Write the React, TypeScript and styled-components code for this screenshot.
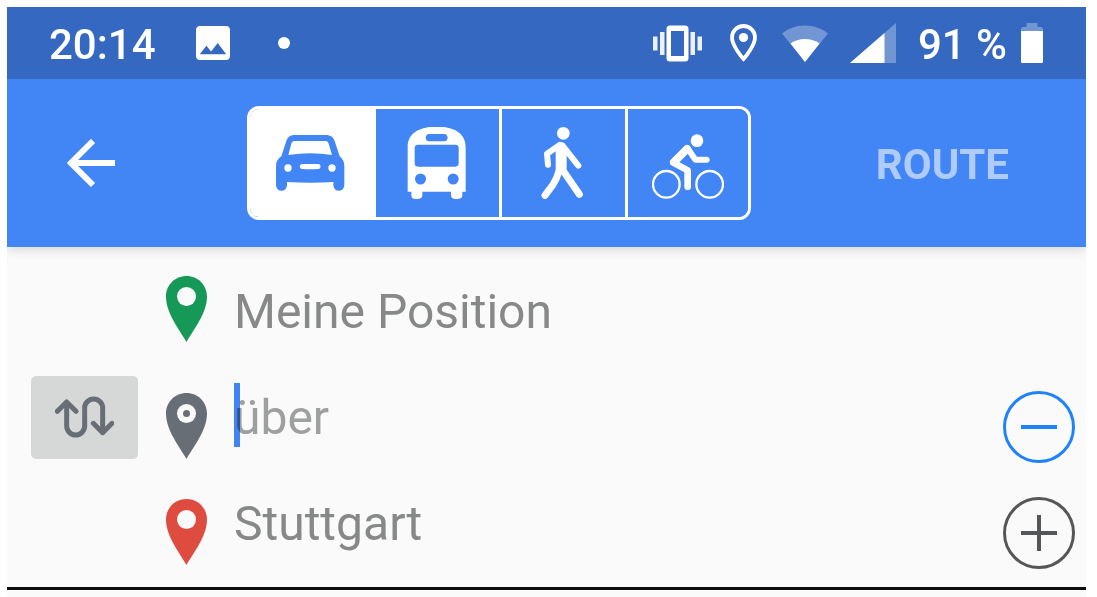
import React from "react";
import styled, { createGlobalStyle } from "styled-components";

const GlobalStyle = createGlobalStyle`
  * { box-sizing: border-box; }
  body {
    margin: 0;
    background: #ffffff;
    font-family: Roboto, "Liberation Sans", sans-serif;
  }
  button { font: inherit; margin: 0; padding: 0; border: 0; background: none; cursor: pointer; }
  svg { display: block; flex: none; }
`;

const Page = styled.div`
  padding: 7px 11px 0 7px;
`;

const Screen = styled.main`
  background: #fafafa;
`;

const StatusBar = styled.div`
  display: flex;
  align-items: center;
  justify-content: space-between;
  height: 72px;
  padding: 0 43px 0 42px;
  background: #3569c1;
  color: #ffffff;
`;

const StatusGroup = styled.div`
  display: flex;
  align-items: center;
`;

const StatusText = styled.span`
  padding-top: 4px;
  font-size: 42px;
  line-height: 48px;
  font-weight: 500;
  white-space: nowrap;
`;

const StatusItem = styled.span<{ $gap: number }>`
  display: flex;
  margin-left: ${(p) => p.$gap}px;
`;

const Dot = styled.span`
  width: 12px;
  height: 12px;
  border-radius: 50%;
  background: #ffffff;
`;

const Toolbar = styled.header`
  position: relative;
  display: flex;
  align-items: center;
  height: 168px;
  padding: 0 77px 0 60px;
  background: #4286f5;
  box-shadow: 0 3px 10px rgba(0, 0, 0, 0.14);
  clip-path: inset(0 0 -20px 0);
`;

const BackButton = styled.button`
  color: #ffffff;
`;

const ModeGroup = styled.div`
  display: flex;
  width: 504px;
  height: 114px;
  margin: 0 auto 0 131px;
  border: 3px solid #ffffff;
  border-radius: 12px;
  overflow: hidden;
`;

const ModeButton = styled.button<{ $active?: boolean }>`
  display: flex;
  align-items: center;
  justify-content: center;
  flex: 0 0 126px;
  border-right: 3px solid #ffffff;
  background: ${(p) => (p.$active ? "#ffffff" : "#4286f5")};
  color: ${(p) => (p.$active ? "#4286f5" : "#ffffff")};

  &:last-child {
    flex: 1;
    border-right: 0;
  }
`;

const RouteButton = styled.button`
  padding-top: 4px;
  color: #aecbfb;
  font-size: 42px;
  line-height: 48px;
  font-weight: 700;
`;

const Stops = styled.form`
  padding: 12px 11px 10px 24px;
  border-bottom: 3px solid #0c0c0c;
`;

const StopRow = styled.div`
  display: grid;
  grid-template-columns: 107px 41px 1fr 72px;
  align-items: center;
  height: 106px;
`;

const SwapButton = styled.button`
  display: flex;
  align-items: center;
  justify-content: center;
  height: 83px;
  margin-bottom: 2px;
  border-radius: 5px;
  background: #d6d8d7;
  color: #676e76;
`;

const PinSlot = styled.div<{ $raised?: boolean }>`
  grid-column: 2;
  align-self: end;
  width: 41px;
  margin-left: 28px;
  padding-bottom: ${(p) => (p.$raised ? 23 : 12)}px;
`;

const Field = styled.div`
  position: relative;
  grid-column: 3;
  margin: 0 24px 0 55px;
`;

const StopInput = styled.input`
  display: block;
  width: 100%;
  height: 64px;
  padding: 0;
  border: 0;
  outline: 0;
  background: transparent;
  color: #878988;
  font-family: inherit;
  font-size: 48px;
  line-height: 64px;

  &::placeholder { color: #9ea09f; opacity: 1; }
`;

const Caret = styled.span`
  position: absolute;
  top: -3px;
  left: 0;
  width: 6px;
  height: 64px;
  background: #4286f5;
  mix-blend-mode: multiply;
`;

const RoundButton = styled.button<{ $primary?: boolean }>`
  grid-column: 4;
  align-self: end;
  margin-bottom: 8px;
  color: ${(p) => (p.$primary ? "#1f82fb" : "#555657")};
`;

const Footer = styled.div`
  height: 7px;
`;

const PhotoIcon = () => (
  <svg width="34" height="34" viewBox="3 3 18 18" fill="currentColor">
    <path d="M21 19V5c0-1.100-.9-2-2-2H5c-1.100 0-2 .9-2 2v14c0 1.100.9 2 2 2h14c1.100 0 2-.9 2-2zM8.500 13.500l2.500 3.010L14.500 12l4.500 6H5l3.500-4.500z" />
  </svg>
);

const VibrateIcon = () => (
  <svg width="49" height="37" viewBox="0 0 49 37" fill="currentColor">
    <rect x="0" y="11.500" width="4.500" height="14" opacity=".9" />
    <rect x="7" y="7" width="4.500" height="23" opacity=".9" />
    <rect x="37.500" y="7" width="4.500" height="23" opacity=".9" />
    <rect x="44.500" y="11.500" width="4.500" height="14" opacity=".9" />
    <path fillRule="evenodd" d="M17 .5h15a3.500 3.500 0 0 1 3.500 3.500v29a3.500 3.500 0 0 1-3.500 3.500H17a3.500 3.500 0 0 1-3.500-3.500V4A3.500 3.500 0 0 1 17 .5zM18 6v25h13V6z" />
  </svg>
);

const LocationIcon = () => (
  <svg width="27" height="38" viewBox="0 0 27 38">
    <path d="M13.500 2C7 2 2 7 2 13.500 2 22 13.500 35 13.500 35S25 22 25 13.500C25 7 20 2 13.500 2z" fill="none" stroke="currentColor" strokeWidth="3.800" />
    <circle cx="13.500" cy="13.500" r="4.600" fill="currentColor" />
  </svg>
);

const WifiIcon = () => (
  <svg width="46" height="37" viewBox="0 0 46 37" fill="currentColor">
    <path opacity=".3" d="M0 8.500C6 3.500 14 .5 23 .5s17 3 23 8L23 37z" />
    <path d="M8.500 18.500c4-3 9-4.500 14.500-4.500s10.500 1.500 14.500 4.500L23 37z" />
  </svg>
);

const SignalIcon = () => (
  <svg width="46" height="40" viewBox="0 0 46 40" fill="currentColor">
    <path opacity=".3" d="M0 40L46 0v40z" />
    <path d="M0 40L34.500 10v30z" />
  </svg>
);

const BatteryIcon = () => (
  <svg width="22" height="40" viewBox="0 0 22 40" fill="currentColor">
    <path opacity=".3" d="M5.500 0h11v4H20a2 2 0 0 1 2 2v2H0V6a2 2 0 0 1 2-2h3.500z" />
    <path d="M0 8h22v31a1 1 0 0 1-1 1H1a1 1 0 0 1-1-1z" />
  </svg>
);

const BackIcon = () => (
  <svg width="49" height="49" viewBox="0 0 49 49" fill="none" stroke="currentColor" strokeWidth="6">
    <path d="M48 24H6M26 2l-22 22 22 22" />
  </svg>
);

const CarIcon = () => (
  <svg width="72" height="72" viewBox="108 96 216 216" fill="currentColor">
    <path
      fillRule="evenodd"
      d="M164 120H258C272 120 280 127 284 138L299 184C308 192 313 200 313 213V271A16.500 16.500 0 0 1 280 271V261Q211 266 141 261V271A16.500 16.500 0 0 1 108 271V213C108 200 113 192 124 184L139 138C143 127 150 120 164 120Z
        M164 138C159 138 156 140 154 146L145 180Q210 170 276 180L266 146C264 140 261 138 256 138Z
        M155 219A11 11 0 1 0 133 219A11 11 0 1 0 155 219Z
        M287 219A11 11 0 1 0 265 219A11 11 0 1 0 287 219Z
        M187 207A7.500 7.500 0 0 0 187 222Q211 224 234 222A7.500 7.500 0 0 0 234 207Z"
    />
  </svg>
);

const BusIcon = () => (
  <svg width="72" height="72" viewBox="484 96 216 216" fill="currentColor">
    <path
      fillRule="evenodd"
      d="M501 290V156C501 112 540 95 588 95S675 112 675 156V290H665V299C665 308 660 312 648 312S631 308 631 299V290H545V299C545 308 540 312 528 312S512 308 512 299V290Z
        M565 117C552 117 552 139 565 139H611C624 139 624 117 611 117Z
        M532 149Q522 149 522 159V205Q522 215 532 215H644Q654 215 654 205V159Q654 149 644 149Z
        M556 252A16.500 16.500 0 1 0 523 252A16.500 16.500 0 1 0 556 252Z
        M654 252A16.500 16.500 0 1 0 621 252A16.500 16.500 0 1 0 654 252Z"
    />
  </svg>
);

const WalkIcon = () => (
  <svg width="72" height="72" viewBox="114 96 216 216" fill="none" stroke="currentColor" strokeLinecap="round" strokeLinejoin="round">
    <circle cx="220" cy="115" r="19" fill="currentColor" stroke="none" />
    <path d="M197 160Q212 132 230 156V222L222 238H204L197 228Z" fill="currentColor" stroke="none" />
    <path strokeWidth="18" d="M174 209L171 176L209 150M217 151L265 212" />
    <path strokeWidth="21" d="M207 228Q200 252 189 269L165 301M220 228L268 298" />
  </svg>
);

const BikeIcon = () => (
  <svg width="72" height="72" viewBox="486 96 216 216" fill="none" stroke="currentColor" strokeLinecap="round" strokeLinejoin="round">
    <circle cx="621" cy="137" r="19" fill="currentColor" stroke="none" />
    <circle cx="529" cy="268" r="40" strokeWidth="7" />
    <circle cx="659" cy="268" r="40" strokeWidth="7" />
    <path strokeWidth="24" d="M591 162L552 201" />
    <path strokeWidth="20" d="M550 203L593 226V275" />
    <path strokeWidth="18" d="M593 160L616 194H650" />
  </svg>
);

const SwapIcon = () => (
  <svg width="59" height="46" viewBox="165 461 177 138" fill="none" stroke="currentColor" strokeWidth="15" strokeLinecap="round" strokeLinejoin="round">
    <path d="M172 513L200 485L228 513M200 487V557A27 27 0 0 0 254 557V503A27 27 0 0 1 308 503V572M280 549L308 577L336 549" />
  </svg>
);

const PinIcon = ({ color, dotted }: { color: string; dotted?: boolean }) => (
  <svg width="41" height="66" viewBox="0 0 41 66">
    <path d="M20.500 0C9 0 0 9 0 20.500 0 37 13 53 20.500 66 28 53 41 37 41 20.500 41 9 32 0 20.500 0z" fill={color} />
    <circle cx="20.500" cy="20.500" r="9.500" fill="#fafafa" />
    {dotted && <circle cx="20.500" cy="20.500" r="3.500" fill={color} />}
  </svg>
);

const CircleIcon = ({ plus }: { plus?: boolean }) => (
  <svg width="72" height="72" viewBox="0 0 72 72" fill="none" stroke="currentColor">
    <circle cx="36" cy="36" r="34.500" strokeWidth="3" />
    <path strokeWidth="4" d={plus ? "M18 36H54M36 18V54" : "M18 36H54"} />
  </svg>
);

export default function App() {
  return (
    <>
      <GlobalStyle />
      <Page>
        <Screen>
          <StatusBar>
            <StatusGroup>
              <StatusText>20:14</StatusText>
              <StatusItem $gap={40}><PhotoIcon /></StatusItem>
              <StatusItem $gap={48}><Dot /></StatusItem>
            </StatusGroup>
            <StatusGroup>
              <VibrateIcon />
              <StatusItem $gap={28}><LocationIcon /></StatusItem>
              <StatusItem $gap={25}><WifiIcon /></StatusItem>
              <StatusItem $gap={22}><SignalIcon /></StatusItem>
              <StatusItem $gap={22}><StatusText>91 %</StatusText></StatusItem>
              <StatusItem $gap={14}><BatteryIcon /></StatusItem>
            </StatusGroup>
          </StatusBar>
          <Toolbar>
            <BackButton type="button" aria-label="Zurück"><BackIcon /></BackButton>
            <ModeGroup role="group" aria-label="Verkehrsmittel">
              <ModeButton type="button" $active aria-pressed="true" aria-label="Auto"><CarIcon /></ModeButton>
              <ModeButton type="button" aria-label="Bus"><BusIcon /></ModeButton>
              <ModeButton type="button" aria-label="Zu Fuß"><WalkIcon /></ModeButton>
              <ModeButton type="button" aria-label="Fahrrad"><BikeIcon /></ModeButton>
            </ModeGroup>
            <RouteButton type="button">ROUTE</RouteButton>
          </Toolbar>
          <Stops>
            <StopRow>
              <PinSlot $raised><PinIcon color="#169857" /></PinSlot>
              <Field><StopInput aria-label="Start" defaultValue="Meine Position" /></Field>
            </StopRow>
            <StopRow>
              <SwapButton type="button" aria-label="Richtung tauschen"><SwapIcon /></SwapButton>
              <PinSlot><PinIcon color="#676e76" dotted /></PinSlot>
              <Field>
                <StopInput aria-label="Zwischenziel" placeholder="über" />
                <Caret />
              </Field>
              <RoundButton type="button" $primary aria-label="Entfernen"><CircleIcon /></RoundButton>
            </StopRow>
            <StopRow>
              <PinSlot><PinIcon color="#de4c3f" /></PinSlot>
              <Field><StopInput aria-label="Ziel" defaultValue="Stuttgart" /></Field>
              <RoundButton type="button" aria-label="Hinzufügen"><CircleIcon plus /></RoundButton>
            </StopRow>
          </Stops>
          <Footer />
        </Screen>
      </Page>
    </>
  );
}
